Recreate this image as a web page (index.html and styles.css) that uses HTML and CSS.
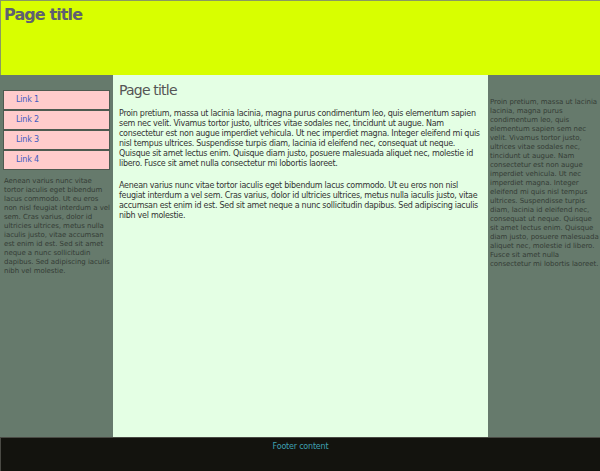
FILE: index.html
```html
<!DOCTYPE html>
<html>
<head>
<meta charset="utf-8">
<title>Page title</title>
<link rel="stylesheet" href="styles.css">
</head>
<body>
<div class="page">
  <header class="header">
    <h1 class="site-title">Page title</h1>
  </header>
  <div class="columns">
    <aside class="left">
      <ul class="nav">
        <li><a href="#">Link 1</a></li>
        <li><a href="#">Link 2</a></li>
        <li><a href="#">Link 3</a></li>
        <li><a href="#">Link 4</a></li>
      </ul>
      <p class="side-text">Aenean varius nunc vitae tortor iaculis eget bibendum lacus commodo. Ut eu eros non nisl feugiat interdum a vel sem. Cras varius, dolor id ultricies ultrices, metus nulla iaculis justo, vitae accumsan est enim id est. Sed sit amet neque a nunc sollicitudin dapibus. Sed adipiscing iaculis nibh vel molestie.</p>
    </aside>
    <main class="main">
      <h2 class="main-title">Page title</h2>
      <p class="main-text">Proin pretium, massa ut lacinia lacinia, magna purus condimentum leo, quis elementum sapien sem nec velit. Vivamus tortor justo, ultrices vitae sodales nec, tincidunt ut augue. Nam consectetur est non augue imperdiet vehicula. Ut nec imperdiet magna. Integer eleifend mi quis nisl tempus ultrices. Suspendisse turpis diam, lacinia id eleifend nec, consequat ut neque. Quisque sit amet lectus enim. Quisque diam justo, posuere malesuada aliquet nec, molestie id libero. Fusce sit amet nulla consectetur mi lobortis laoreet.</p>
      <p class="main-text">Aenean varius nunc vitae tortor iaculis eget bibendum lacus commodo. Ut eu eros non nisl feugiat interdum a vel sem. Cras varius, dolor id ultricies ultrices, metus nulla iaculis justo, vitae accumsan est enim id est. Sed sit amet neque a nunc sollicitudin dapibus. Sed adipiscing iaculis nibh vel molestie.</p>
    </main>
    <aside class="right">
      <p class="side-text">Proin pretium, massa ut lacinia lacinia, magna purus condimentum leo, quis elementum sapien sem nec velit. Vivamus tortor justo, ultrices vitae sodales nec, tincidunt ut augue. Nam consectetur est non augue imperdiet vehicula. Ut nec imperdiet magna. Integer eleifend mi quis nisl tempus ultrices. Suspendisse turpis diam, lacinia id eleifend nec, consequat ut neque. Quisque sit amet lectus enim. Quisque diam justo, posuere malesuada aliquet nec, molestie id libero. Fusce sit amet nulla consectetur mi lobortis laoreet.</p>
    </aside>
  </div>
  <footer class="footer">Footer content</footer>
</div>
</body>
</html>
```

FILE: styles.css
```css
html, body {
  margin: 0;
  padding: 0;
}
body {
  font-family: "DejaVu Sans", Verdana, sans-serif;
  background: #13130e;
}
.page {
  width: 600px;
  height: 471px;
  display: flex;
  flex-direction: column;
}
.header {
  height: 74px;
  background: #d8ff00;
  border-top: 1px solid #8a9a60;
  border-left: 1px solid #8a9a60;
}
.site-title {
  margin: 0;
  padding: 5px 0 0 3px;
  font-size: 16px;
  font-weight: bold;
  letter-spacing: -0.9px;
  color: #5f6070;
  line-height: 18px;
}
.columns {
  display: flex;
  height: 362px;
}
.left {
  width: 113px;
  background: #667a6c;
  padding-top: 15px;
  box-sizing: border-box;
}
.nav {
  list-style: none;
  margin: 0 3px 0 3px;
  padding: 0;
}
.nav li {
  background: #ffcccc;
  border: 1px solid #4d5a50;
  height: 18px;
}
.nav a {
  display: block;
  padding-left: 12px;
  line-height: 18px;
  font-size: 8px;
  letter-spacing: -0.2px;
  color: #3f5cc0;
  text-decoration: none;
}
.side-text {
  margin: 0;
  font-size: 7px;
  line-height: 9px;
  letter-spacing: -0.05px;
  color: #353d36;
}
.left .side-text {
  padding: 7px 2px 0 4px;
}
.main {
  flex: 1;
  background: #e4ffe4;
  padding: 6px 6px 0 6px;
}
.main-title {
  margin: 0 0 10px 0;
  font-size: 14px;
  font-weight: normal;
  letter-spacing: -0.8px;
  color: #555555;
  line-height: 18px;
}
.main-text {
  margin: 0 0 12px 0;
  font-size: 8px;
  line-height: 10px;
  letter-spacing: -0.28px;
  color: #333333;
}
.right {
  width: 112px;
  background: #667a6c;
  padding: 23px 0 0 2px;
  box-sizing: border-box;
}
.footer {
  height: 34px;
  border-top: 1px solid #4a4a44;
  border-left: 1px solid #4a4a44;
  background: #13130e;
  color: #3fa0b0;
  font-size: 8px;
  letter-spacing: -0.2px;
  text-align: center;
  padding-top: 4px;
  box-sizing: border-box;
}
```
